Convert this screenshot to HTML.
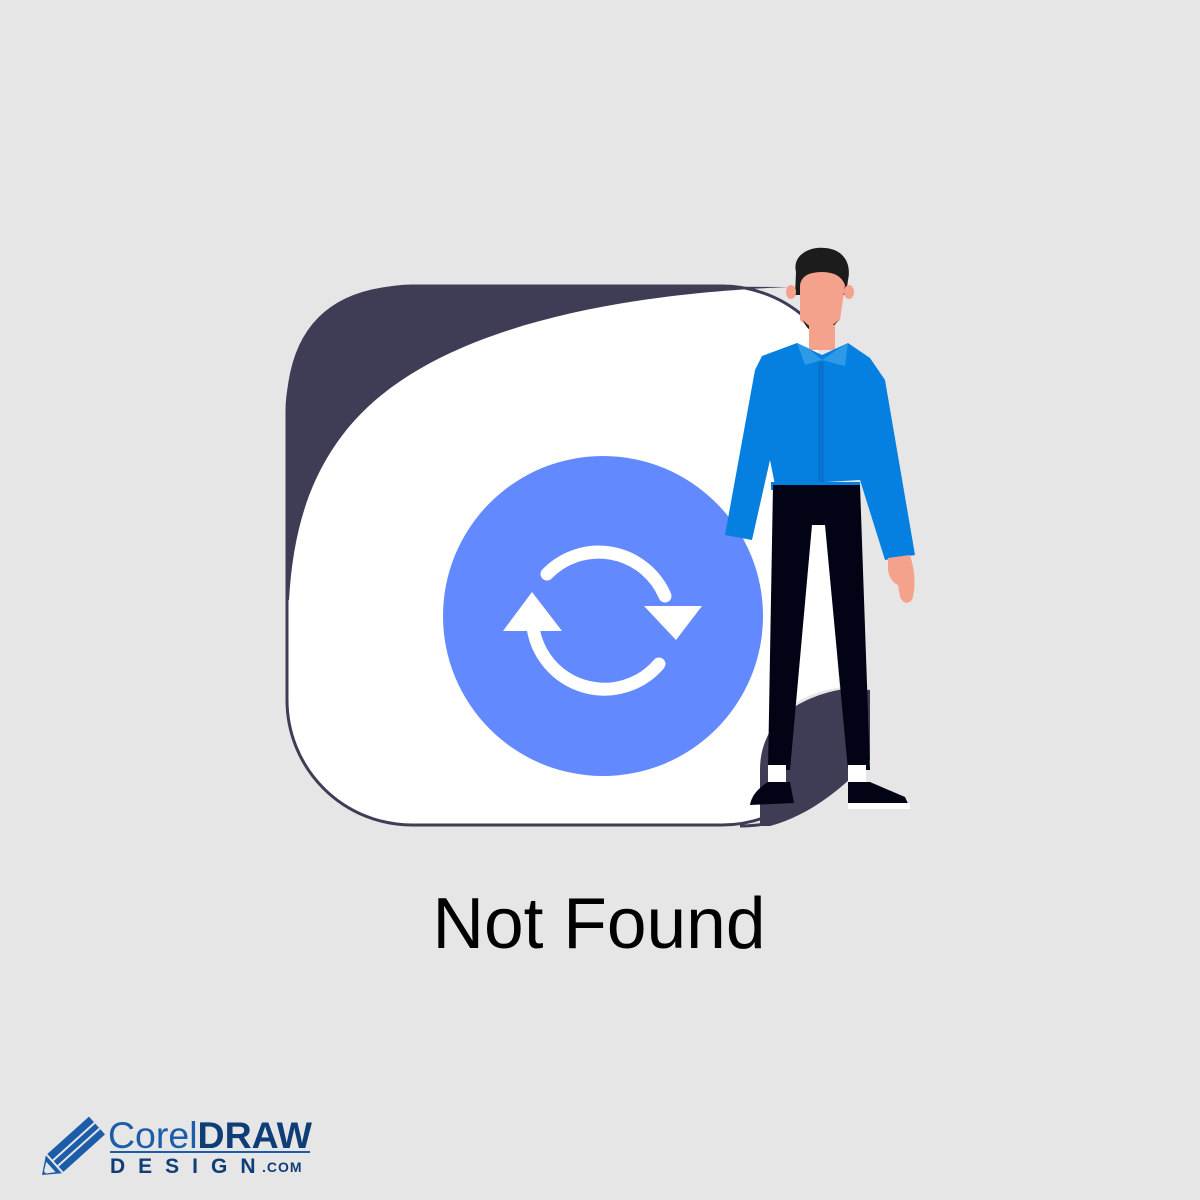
<!DOCTYPE html>
<html><head><style>
html,body{margin:0;padding:0;background:#e6e6e6;width:1200px;height:1200px;overflow:hidden}
</style></head><body>
<svg width="1200" height="1200" viewBox="0 0 1200 1200" xmlns="http://www.w3.org/2000/svg">
<rect width="1200" height="1200" fill="#e6e6e6"/>
<rect x="287" y="286" width="560" height="539" rx="125" fill="#fff" stroke="#3f3d56" stroke-width="3"/>
<path d="M415 285 L790 287 C660 292 450 315 355 420 C310 470 293 530 289 600 L286 600 L286 415 Q286 285 415 285 Z" fill="#3f3d56"/>
<path d="M800 290 L860 290 L860 700 L840 700 C825 500 830 330 800 290Z" fill="#e6e6e6"/>
<path d="M760 826 C770 790 760 730 800 700 C830 685 850 686 870 690 L870 826 Z" fill="#e6e6e6"/>
<path d="M760 770 C760 720 800 695 850 688 L870 690 L870 760 C840 790 810 815 770 826 L760 826 Z" fill="#3f3d56"/>
<path d="M740 826 Q790 826 800 800" fill="none" stroke="#3f3d56" stroke-width="3"/>
<circle cx="603" cy="616" r="160" fill="#6389ff"/>
<g fill="none" stroke="#fff" stroke-width="13" stroke-linecap="round">
<path d="M547 574 A72 72 0 0 1 665 596"/>
<path d="M659 664 A72 72 0 0 1 533 627"/>
</g>
<polygon points="644,606 702,606 676,640" fill="#fff"/>
<polygon points="503,631 562,631 532,592" fill="#fff"/>
<path d="M796 272 C792 255 810 246 825 248 C842 249 852 262 848 280 L846 295 L795 295 Z" fill="#1c1c1c"/>
<ellipse cx="791" cy="292" rx="5" ry="7" fill="#f4a28c"/>
<ellipse cx="849" cy="292" rx="5" ry="7" fill="#f4a28c"/>
<path d="M800 285 L800 320 Q820 340 840 320 L845 285 Q840 272 822 272 Q802 272 800 285Z" fill="#f4a28c"/>
<path d="M803 320 Q820 340 838 320 Q830 333 820 334 Q808 333 803 320Z" fill="#1c1c1c"/>
<rect x="809" y="325" width="26" height="25" fill="#f4a28c"/>
<path d="M762 356 L797 343 L822 355 L848 343 L870 358 L885 380 L915 555 L885 560 L860 480 L775 485 L770 460 L752 540 L725 535 L755 370Z" fill="#0680e0"/>
<path d="M797 343 L808 348 L822 360 L805 365Z M848 343 L840 348 L822 360 L845 366Z" fill="#2d9ae8"/>
<rect x="818" y="362" width="6" height="122" fill="#0674cc"/>
<rect x="771" y="482" width="89" height="8" fill="#0680e0"/>
<path d="M773 485 L860 485 L870 770 L848 770 L825 525 L812 525 L790 770 L768 770 Z" fill="#020415"/>
<path d="M888 558 L910 555 Q918 580 912 600 Q905 607 900 597 L898 585 Q890 582 888 570Z" fill="#f4a28c"/>
<rect x="768" y="765" width="18" height="20" fill="#fff"/>
<rect x="848" y="765" width="18" height="20" fill="#fff"/>
<path d="M768 782 L790 782 L794 803 L750 805 Q752 792 768 782Z" fill="#020415"/>
<path d="M848 782 L870 782 L905 797 L910 808 L848 808Z" fill="#020415"/>
<rect x="848" y="803" width="62" height="6" fill="#fff"/>
<text x="599" y="948" text-anchor="middle" font-family="Liberation Sans, sans-serif" font-size="72" textLength="333" lengthAdjust="spacingAndGlyphs" fill="#000">Not Found</text>
<g transform="translate(42,1175) rotate(-42)">
<polygon points="0,0 16,-12 16,12" fill="#1b5da8"/>
<polygon points="4,-1.5 12,-7 12,7 4,1.5" fill="#e6e6e6"/>
<rect x="18" y="-12" width="56" height="24" fill="#1b5da8"/>
<rect x="18" y="-4.5" width="56" height="2" fill="#e6e6e6"/>
<rect x="18" y="3" width="56" height="2" fill="#e6e6e6"/>
</g>
<text x="108" y="1148" font-family="Liberation Sans, sans-serif" font-size="37" textLength="204" lengthAdjust="spacingAndGlyphs" fill="#1b5da8">Corel<tspan font-weight="bold" fill="#0f3d78">DRAW</tspan></text>
<rect x="110" y="1151" width="200" height="2" fill="#1b5da8"/>
<text x="110" y="1173" font-family="Liberation Sans, sans-serif" font-weight="bold" font-size="21" letter-spacing="13" fill="#0f3d78">DESIGN</text>
<text x="262" y="1172" font-family="Liberation Sans, sans-serif" font-weight="bold" font-size="14" letter-spacing="1" fill="#0f3d78">.COM</text>
</svg>
</body></html>
